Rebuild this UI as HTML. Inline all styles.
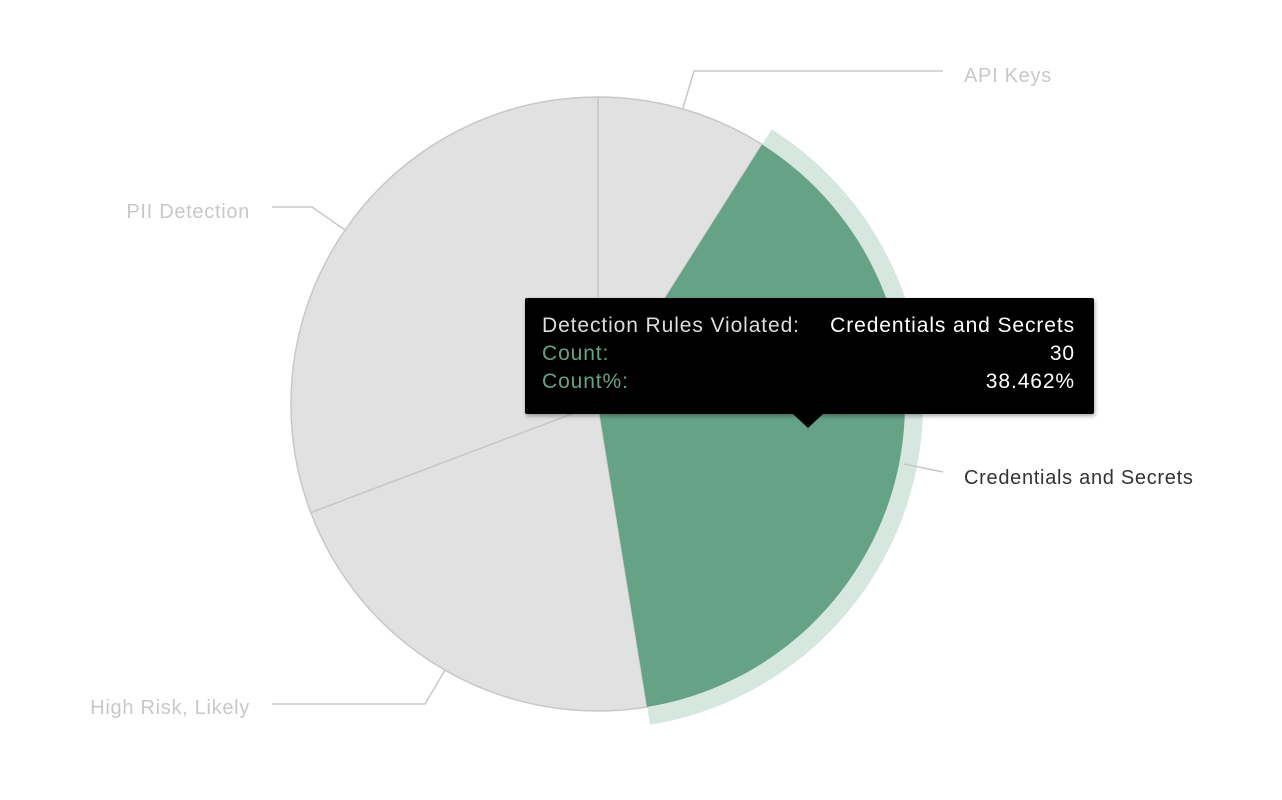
<!DOCTYPE html>
<html><head><meta charset="utf-8"><style>
html,body{margin:0;padding:0;background:#fff;width:1282px;height:800px;overflow:hidden;font-family:"Liberation Sans",sans-serif}
.tt{position:absolute;left:525px;top:298px;width:569px;height:116px;background:#000;border-radius:2px;box-shadow:1px 2px 4px rgba(0,0,0,.35);color:#fff;font-size:21px;letter-spacing:0.9px}
.tt .r{position:absolute;left:17px;right:19px;height:28px;white-space:nowrap}
.tt .v{position:absolute;right:0;top:0}
.lbl{position:absolute;font-size:20px;letter-spacing:0.7px;color:#c8c8c8;white-space:nowrap}
</style></head><body>
<svg width="1282" height="800" style="position:absolute;left:0;top:0">
<path d="M762.1,144.5 L771.7,129.3 A325,325 0 0 1 650,724.8 L647.1,707 A307,307 0 0 0 762.1,144.5Z" fill="#d5e7df"/>
<path d="M598,404 L598,97 A307,307 0 0 1 762.1,144.5Z" fill="#e1e1e1" stroke="#c8c8c8" stroke-width="1.5"/>
<path d="M598,404 L647.1,707 A307,307 0 0 1 310.8,512.5Z" fill="#e1e1e1" stroke="#c8c8c8" stroke-width="1.5"/>
<path d="M598,404 L310.8,512.5 A307,307 0 0 1 598,97Z" fill="#e1e1e1" stroke="#c8c8c8" stroke-width="1.5"/>
<path d="M598,404 L762.1,144.5 A307,307 0 0 1 647.1,707Z" fill="#65a286"/>
<g fill="none" stroke="#c8c8c8" stroke-width="1.5">
<path d="M943,71 L694,71 L683,108"/>
<path d="M272,207 L312,207 L345,230"/>
<path d="M272,704 L425,704 L445,670"/>
<path d="M904,464 L943,472"/>
</g>
<path d="M793,414 L808,428 L823,414Z" fill="#000"/>
</svg>
<div class="tt">
<div class="r" style="top:16px;color:#ddd">Detection Rules Violated:<span class="v" style="color:#fff">Credentials and Secrets</span></div>
<div class="r" style="top:44px;color:#65a286">Count:<span class="v" style="color:#fff">30</span></div>
<div class="r" style="top:72px;color:#65a286">Count%:<span class="v" style="color:#fff">38.462%</span></div>
</div>
<div class="lbl" style="left:964px;top:65px">API Keys</div>
<div class="lbl" style="right:1032px;top:201px">PII Detection</div>
<div class="lbl" style="right:1032px;top:697px">High Risk, Likely</div>
<div class="lbl" style="left:964px;top:467px;color:#333">Credentials and Secrets</div>
</body></html>
